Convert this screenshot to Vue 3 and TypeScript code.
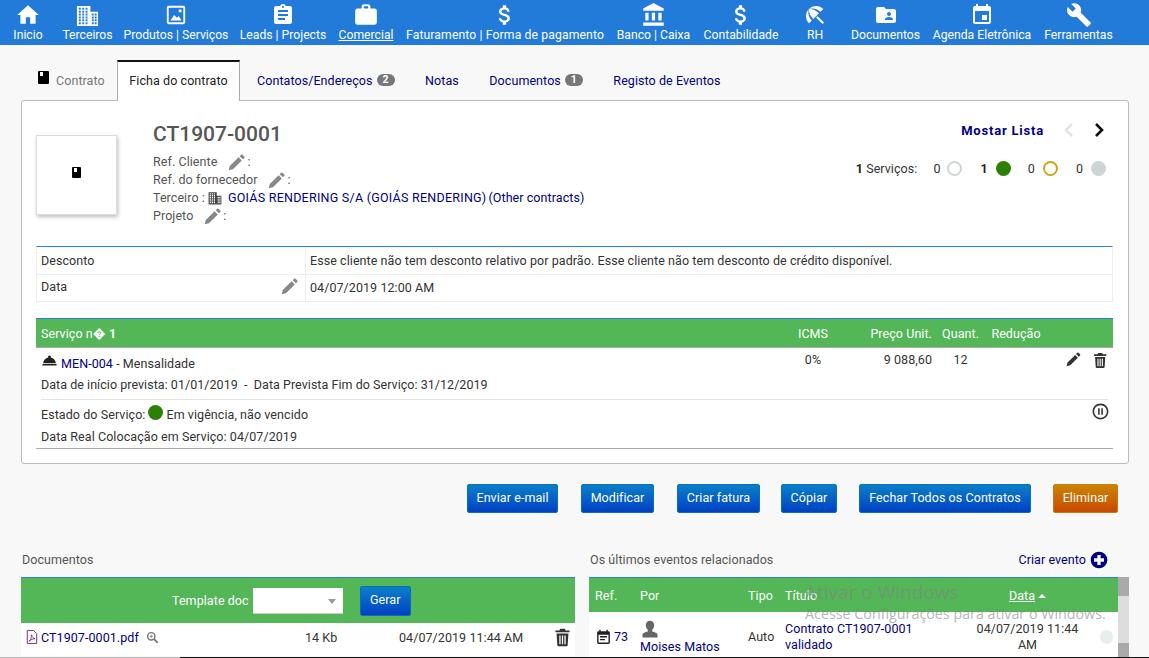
<script setup lang="ts">
const P = {
  home: 'M10 20v-6h4v6h5v-8h3L12 3 2 12h3v8z',
  assign: 'M19 3h-4.18C14.4 1.84 13.3 1 12 1c-1.3 0-2.4.84-2.82 2H5c-1.1 0-2 .9-2 2v14c0 1.1.9 2 2 2h14c1.1 0 2-.9 2-2V5c0-1.1-.9-2-2-2zm-7 0c.55 0 1 .45 1 1s-.45 1-1 1-1-.45-1-1 .45-1 1-1zm2 14H7v-2h7v2zm3-4H7v-2h10v2zm0-4H7V7h10v2z',
  work: 'M20 6h-4V4c0-1.11-.89-2-2-2h-4c-1.11 0-2 .89-2 2v2H4c-1.11 0-1.99.89-1.99 2L2 19c0 1.11.89 2 2 2h16c1.11 0 2-.89 2-2V8c0-1.11-.89-2-2-2zm-6 0h-4V4h4v2z',
  money: 'M11.8 10.9c-2.27-.59-3-1.2-3-2.15 0-1.09 1.01-1.85 2.7-1.85 1.78 0 2.44.85 2.5 2.1h2.21c-.07-1.72-1.12-3.3-3.21-3.81V3h-3v2.16c-1.94.42-3.5 1.68-3.5 3.61 0 2.31 1.91 3.46 4.7 4.13 2.5.6 3 1.48 3 2.41 0 .69-.49 1.79-2.7 1.79-2.06 0-2.87-.92-2.98-2.1h-2.2c.12 2.19 1.76 3.42 3.68 3.83V21h3v-2.15c1.95-.37 3.5-1.5 3.5-3.55 0-2.84-2.43-3.81-4.7-4.4z',
  bank: 'M4 10v7h3v-7H4zm6 0v7h3v-7h-3zM2 22h19v-3H2v3zm14-12v7h3v-7h-3zm-4.5-9L2 6v2h19V6l-9.5-5z',
  beach: 'M13.127 14.56l1.43-1.43 6.44 6.443L19.57 21zm4.293-5.73l2.86-2.86c-3.95-3.95-10.35-3.96-14.3-.02 3.93-1.3 8.31-.25 11.44 2.88zM5.95 5.98c-3.94 3.95-3.93 10.35.02 14.3l2.86-2.86C5.7 14.29 4.65 9.91 5.95 5.98zm.02-.02l-.01.01c-.38 3.01 1.17 6.88 4.3 10.02l5.73-5.73c-3.13-3.13-7.01-4.68-10.02-4.3z',
  folder: 'M20 6h-8l-2-2H4c-1.1 0-1.99.9-1.99 2L2 18c0 1.1.9 2 2 2h16c1.1 0 2-.9 2-2V8c0-1.1-.9-2-2-2zm-5 3c1.1 0 2 .9 2 2s-.9 2-2 2-2-.9-2-2 .9-2 2-2zm4 8h-8v-1c0-1.33 2.67-2 4-2s4 .67 4 2v1z',
  event: 'M17 12h-5v5h5v-5zM16 1v2H8V1H6v2H5c-1.11 0-1.99.9-1.99 2L3 19c0 1.1.89 2 2 2h14c1.1 0 2-.9 2-2V5c0-1.1-.9-2-2-2h-1V1h-2zm3 18H5V8h14v11z',
  build: 'M22.7 19l-9.1-9.1c.9-2.3.4-5-1.5-6.9-2-2-5-2.4-7.4-1.3L9 6 6 9 1.6 4.7C.4 7.1.9 10.1 2.9 12.1c1.9 1.9 4.6 2.4 6.9 1.5l9.1 9.1c.4.4 1 .4 1.4 0l2.3-2.3c.5-.4.5-1.1.1-1.4z',
  image: 'M4 2h16a2 2 0 0 1 2 2v16a2 2 0 0 1-2 2H4a2 2 0 0 1-2-2V4a2 2 0 0 1 2-2zm0 2v16h16V4zm11 2h3v3h-3zM6 18l4-6 3 3 2-2 3 5z',
  pencil: 'M1 23l1.500-6L15 4.500 19.500 9 7 21.500zM16.500 3l2-2a1.500 1.500 0 0 1 2 0l2.500 2.500a1.500 1.500 0 0 1 0 2l-2 2z',
  trash: 'M9 1h6l1 2h5v2.500H3V3h5zM4.500 7h15l-1 15a1.500 1.500 0 0 1-1.500 1H7a1.500 1.500 0 0 1-1.500-1zM8 9.500v11h1.600v-11zm3.200 0v11h1.600v-11zm3.200 0v11H16v-11z',
  note: 'M17 10H7v2h10v-2zm2-7h-1V1h-2v2H8V1H6v2H5c-1.11 0-1.99.9-1.99 2L3 19c0 1.1.89 2 2 2h14c1.1 0 2-.9 2-2V5c0-1.1-.9-2-2-2zm0 16H5V8h14v11zm-5-5H7v2h7v-2z',
  plus: 'M12 2a10 10 0 1 0 0 20 10 10 0 0 0 0-20zm6 12h-4v4h-4v-4H6v-4h4V6h4v4h4z',
  pause: 'M9 16h2V8H9v8zm3-14C6.48 2 2 6.48 2 12s4.48 10 10 10 10-4.48 10-10S17.52 2 12 2zm0 18c-4.41 0-8-3.59-8-8s3.59-8 8-8 8 3.59 8 8-3.59 8-8 8zm1-4h2V8h-2v8z',
  bell: 'M2 17h20v2H2zm11.84-9.21c.1-.24.16-.51.16-.79 0-1.1-.9-2-2-2s-2 .9-2 2c0 .28.06.55.16.79C6.25 8.6 3.27 11.93 3 16h18c-.27-4.07-3.25-7.4-7.16-8.21z',
  person: 'M12 1c3 0 5 2.400 5 5.400 0 2.200-.9 4.300-2.400 5.400v2.100c3 .8 6.400 2 6.400 3.600V21H3v-3.500c0-1.600 3.400-2.800 6.400-3.600v-2.100C7.900 10.700 7 8.600 7 6.400 7 3.400 9 1 12 1z',
}

// Building glyph: tall left block, lower right block, windows as holes.
function buildingPath(): string {
  let d = 'M1 2h14v6h8v15H1z'
  for (const y of [4, 7, 10, 13, 16, 19]) {
    for (const x of [3, 6.5, 10]) d += `M${x} ${y}h2v2h-2z`
  }
  for (const y of [10, 13, 16, 19]) {
    for (const x of [16.5, 19.5]) d += `M${x} ${y}h2v2h-2z`
  }
  return d
}
const building = buildingPath()

const nav = [
  { label: 'Inicio', icon: P.home, w: 42, mr: 8, size: 26, ls: 0 },
  { label: 'Terceiros', icon: building, w: 61, mr: 0, size: 23, ls: 0 },
  { label: 'Produtos | Serviços', icon: P.image, w: 116, mr: 0, size: 22, ls: 0 },
  { label: 'Leads | Projects', icon: P.assign, w: 98, mr: 0, size: 24, ls: 0 },
  { label: 'Comercial', icon: P.work, w: 68, mr: 0, size: 26, ls: 0, active: true },
  { label: 'Faturamento | Forma de pagamento', icon: P.money, w: 210, mr: 0, size: 26, ls: 0.12 },
  { label: 'Banco | Caixa', icon: P.bank, w: 87, mr: 0, size: 26, ls: 0 },
  { label: 'Contabilidade', icon: P.money, w: 88, mr: 0, size: 26, ls: 0 },
  { label: 'RH', icon: P.beach, w: 60, mr: 0, size: 24, ls: 0 },
  { label: 'Documentos', icon: P.folder, w: 81, mr: 0, size: 24, ls: 0 },
  { label: 'Agenda Eletrônica', icon: P.event, w: 112, mr: 0, size: 24, ls: 0 },
  { label: 'Ferramentas', icon: P.build, w: 81, mr: 0, size: 26, ls: 0 },
]

const tabs = [
  { label: 'Contatos/Endereços', badge: '2' },
  { label: 'Notas' },
  { label: 'Documentos', badge: '1' },
  { label: 'Registo de Eventos' },
]

const buttons = [
  { label: 'Enviar e-mail', w: 91, ml: 0 },
  { label: 'Modificar', w: 73, ml: 23 },
  { label: 'Criar fatura', w: 83, ml: 23 },
  { label: 'Cópiar', w: 56, ml: 21 },
  { label: 'Fechar Todos os Contratos', w: 172, ml: 22 },
  { label: 'Eliminar', w: 65, ml: 22, danger: true },
]
</script>

<template>
  <div class="page">
    <nav class="topbar">
      <a
        v-for="item in nav"
        :key="item.label"
        class="nav-item"
        :class="{ active: item.active }"
        :style="{ width: item.w + 'px', marginRight: item.mr + 'px', letterSpacing: item.ls + 'px' }"
      >
        <span class="nav-icon">
          <svg :width="item.size" :height="item.size" viewBox="0 0 24 24"><path :d="item.icon" fill="#fff" fill-rule="evenodd" /></svg>
        </span>
        <span class="nav-label">{{ item.label }}</span>
      </a>
    </nav>

    <main class="content">
      <div class="tabs">
        <span class="tab tab-static">
          <span class="book small"></span>
          Contrato
        </span>
        <span class="tab tab-active">Ficha do contrato</span>
        <span v-for="t in tabs" :key="t.label" class="tab tab-link">
          {{ t.label }}<b v-if="t.badge" class="badge">{{ t.badge }}</b>
        </span>
      </div>

      <section class="card">
        <div class="head">
          <div class="photo"><span class="book"></span></div>
          <div class="ident">
            <h1>CT1907-0001</h1>
            <div class="ref">Ref. Cliente <svg class="ed" viewBox="0 0 24 24"><path :d="P.pencil" /></svg> :</div>
            <div class="ref">Ref. do fornecedor <svg class="ed" viewBox="0 0 24 24"><path :d="P.pencil" /></svg> :</div>
            <div class="ref">
              Terceiro :
              <svg class="bld" viewBox="0 0 24 24"><path :d="building" fill-rule="evenodd" /></svg>
              <a class="link upper">GOIÁS RENDERING S/A (GOIÁS RENDERING)</a> <a class="link">(Other contracts)</a>
            </div>
            <div class="ref">Projeto <svg class="ed" viewBox="0 0 24 24"><path :d="P.pencil" /></svg> :</div>
          </div>
          <div class="status">
            <div class="pager">
              <a class="list-link">Mostar Lista</a>
              <svg class="chev" viewBox="0 0 12 14"><path d="M9 1 3 7l6 6" fill="none" stroke="#e4e4e4" stroke-width="2.600" /></svg>
              <svg class="chev" viewBox="0 0 12 14"><path d="m3 1 6 6-6 6" fill="none" stroke="#111" stroke-width="2.600" /></svg>
            </div>
            <div class="counts">
              <span class="total"><b>1</b> Serviços:</span>
              <span class="cnt c1">0</span><i class="dot open"></i>
              <b class="cnt c2">1</b><i class="dot green"></i>
              <span class="cnt c3">0</span><i class="dot amber"></i>
              <span class="cnt c4">0</span><i class="dot grey"></i>
            </div>
          </div>
        </div>

        <div class="info">
          <div class="info-row">
            <div class="info-key">Desconto</div>
            <div class="info-val">Esse cliente não tem desconto relativo por padrão. Esse cliente não tem desconto de crédito disponível.</div>
          </div>
          <div class="info-row">
            <div class="info-key">Data <svg class="ed" viewBox="0 0 24 24"><path :d="P.pencil" /></svg></div>
            <div class="info-val">04/07/2019 12:00 AM</div>
          </div>
        </div>

        <div class="service">
          <div class="svc-grid svc-head">
            <div class="svc-title">Serviço n� <b>1</b></div>
            <div class="c">ICMS</div>
            <div class="r">Preço Unit.</div>
            <div class="c">Quant.</div>
            <div class="c">Redução</div>
            <div></div>
          </div>
          <div class="svc-grid svc-main">
            <div class="svc-desc">
              <div class="l1">
                <svg class="bell" viewBox="0 0 24 24"><path :d="P.bell" /></svg>
                <span><a class="link">MEN-004</a> - Mensalidade</span>
              </div>
              <div class="l2">Data de início prevista: 01/01/2019 &nbsp;-&nbsp; Data Prevista Fim do Serviço: 31/12/2019</div>
            </div>
            <div class="c">0%</div>
            <div class="r">9 088,60</div>
            <div class="c">12</div>
            <div></div>
            <div class="actions">
              <svg width="17" height="17" viewBox="0 0 24 24"><path :d="P.pencil" fill="#333" /></svg>
              <svg width="19" height="19" viewBox="0 0 24 24"><path :d="P.trash" fill="#333" fill-rule="evenodd" /></svg>
            </div>
          </div>
          <div class="svc-state">
            <div>
              <div class="l3">Estado do Serviço: <i class="dot green small-dot"></i> Em vigência, não vencido</div>
              <div class="l4">Data Real Colocação em Serviço: 04/07/2019</div>
            </div>
            <svg class="pause" width="19" height="19" viewBox="0 0 24 24"><path :d="P.pause" fill="#333" /></svg>
          </div>
        </div>
      </section>

      <div class="btnbar">
        <button
          v-for="b in buttons"
          :key="b.label"
          class="btn"
          :class="{ danger: b.danger }"
          :style="{ width: b.w + 'px', marginLeft: b.ml + 'px' }"
        >{{ b.label }}</button>
      </div>

      <div class="lower">
        <div class="docs">
          <div class="sec-title">Documentos</div>
          <div class="green-bar doc-bar">
            <span>Template doc</span>
            <span class="select"><i></i></span>
            <button class="btn gerar">Gerar</button>
          </div>
          <div class="doc-row">
            <svg class="pdf" viewBox="0 0 14 16"><path d="M1.500.5h7.500l3.500 3.500v11.500h-11z" fill="none" stroke="#5b1a66" /><path d="M3.500 13c2-1.500 3-5 3-7.500 1 3 2 4 4 4.500-2.500 0-4.500 1-7 3z" fill="none" stroke="#5b1a66" stroke-width=".9" /></svg>
            <a class="link fname">CT1907-0001.pdf</a>
            <svg class="zoomi" viewBox="0 0 16 16"><circle cx="6.500" cy="6.500" r="4.500" fill="none" stroke="#777" stroke-width="1.800" /><path d="m10 10 4.500 4.500" stroke="#777" stroke-width="2.200" /><path d="M4.500 6.500h4M6.500 4.500v4" stroke="#777" /></svg>
            <span class="size">14 Kb</span>
            <span class="ddate">04/07/2019 11:44 AM</span>
            <svg class="dtrash" width="19" height="19" viewBox="0 0 24 24"><path :d="P.trash" fill="#333" fill-rule="evenodd" /></svg>
          </div>
        </div>

        <div class="events">
          <div class="ev-top">
            <div class="sec-title">Os últimos eventos relacionados</div>
            <a class="create">Criar evento
              <svg width="20" height="20" viewBox="0 0 24 24"><path :d="P.plus" fill="#000080" fill-rule="evenodd" /></svg>
            </a>
          </div>
          <div class="ev-wrap">
            <div class="ev-table">
              <div class="ev-grid green-bar ev-head">
                <span>Ref.</span>
                <span>Por</span>
                <span>Tipo</span>
                <span class="nopad">Título</span>
                <span class="c nopad"><u>Data</u><i class="caret"></i></span>
                <span></span>
              </div>
              <div class="ev-grid ev-row">
                <span class="ev-ref">
                  <svg width="17" height="17" viewBox="0 0 24 24"><path :d="P.note" fill="#222" /></svg>
                  <a class="link">73</a>
                </span>
                <span class="ev-by">
                  <svg width="20" height="20" viewBox="0 0 24 24"><path :d="P.person" fill="#666" /></svg>
                  <a class="link">Moises Matos</a>
                </span>
                <span class="ev-type">Auto</span>
                <a class="link ev-title">Contrato CT1907-0001 validado</a>
                <span class="c">04/07/2019 11:44 AM</span>
                <i class="ev-dot"></i>
              </div>
            </div>
            <div class="scroll"><i class="th1"></i><i class="th2"></i></div>
          </div>
        </div>
      </div>
    </main>

    <div class="watermark">
      <div class="w1">Ativar o Windows</div>
      <div class="w2">Acesse Configurações para ativar o Windows.</div>
    </div>
    <div class="edge"></div>
  </div>
</template>

<style>
html, body { margin: 0; background: #f8f8f8; overflow: hidden; }
</style>

<style scoped>
.page {
  position: relative;
  width: 1149px;
  height: 658px;
  overflow: hidden;
  background: #f8f8f8;
  font-family: Roboto, "Liberation Sans", sans-serif;
  font-size: 12.5px;
  letter-spacing: .07px;
  color: #333;
}
.edge {
  position: absolute;
  left: 0;
  right: 0;
  bottom: 0;
  height: 1px;
  background: linear-gradient(90deg, #bbb 0, #bbb 180px, #111 180px, #111 100%);
}
.topbar {
  display: flex;
  height: 45px;
  padding-left: 7px;
  background: #237bd9;
  box-sizing: border-box;
}
.nav-item {
  flex: none;
  display: flex;
  flex-direction: column;
  align-items: center;
  color: #fff;
  font-size: 12.2px;
}
.nav-icon { height: 28px; display: flex; align-items: center; justify-content: center; margin-top: 1px; }
.nav-label { line-height: 14px; margin-top: -1px; white-space: nowrap; }
.nav-item.active .nav-label { text-decoration: underline; }

.content { padding: 15px 20px 0 21px; }
.tabs { display: flex; height: 40px; align-items: stretch; }
.tab { display: flex; align-items: center; white-space: nowrap; box-sizing: border-box; padding-top: 1px; }
.tab-static { width: 96px; padding-left: 17px; color: #777; gap: 7px; }
.tab-active {
  width: 123px;
  justify-content: center;
  background: #fff;
  border: 1px solid #aaa;
  border-top: 2px solid #111;
  border-bottom: 0;
  color: #222;
  position: relative;
  height: 41px;
  padding-top: 0;
  padding-bottom: 3px;
  z-index: 1;
}
.tab-link { color: #000080; padding: 0 13.500px 0 17px; }
.badge {
  display: inline-block;
  margin-left: 4px;
  min-width: 18px;
  height: 12px;
  line-height: 12px;
  border-radius: 7px;
  background: #777;
  color: #fff;
  font-size: 10.500px;
  text-align: center;
}
.book {
  display: inline-block;
  width: 9px;
  height: 11px;
  background: #000;
  border-radius: 1px;
  position: relative;
}
.book::after {
  content: "";
  position: absolute;
  left: 2px;
  top: 1px;
  width: 3px;
  height: 4px;
  background: #fff;
}
.book.small { width: 11px; height: 13px; margin-top: -6px; }

.card {
  height: 364px;
  box-sizing: border-box;
  background: #fff;
  border: 1px solid #bbb;
  border-radius: 3px;
  padding: 0 15px 0 14px;
}
.head { display: flex; height: 145px; }
.photo {
  flex: none;
  width: 81px;
  height: 80px;
  margin-top: 34px;
  padding-bottom: 6px;
  box-sizing: border-box;
  background: #fff;
  border: 1px solid #ddd;
  box-shadow: 1px 2px 4px rgba(0, 0, 0, .25);
  display: flex;
  align-items: center;
  justify-content: center;
}
.ident { margin-left: 36px; flex: 1; padding-top: 20px; color: #555; }
h1 {
  margin: 0 0 6px;
  font-size: 21px;
  line-height: 26px;
  font-weight: 500;
  color: #555;
  letter-spacing: 0;
}
.ref { height: 18px; line-height: 18px; white-space: nowrap; display: flex; align-items: center; gap: 2px; }
.ref .ed { margin-left: 9px; }
.ed { width: 17px; height: 17px; fill: #888; flex: none; }
.bld { width: 14px; height: 14px; fill: #444; margin-right: 4px; margin-left: 1px; }
.upper { letter-spacing: .25px; }
.link { color: #000080; }
.status { width: 270px; flex: none; display: flex; flex-direction: column; align-items: flex-end; }
.pager { display: flex; align-items: center; margin-top: 20px; height: 18px; padding-right: 8px; }
.list-link { font-weight: 700; color: #000080; font-size: 13px; letter-spacing: .8px; margin-right: 19px; }
.chev { width: 12px; height: 14px; }
.chev + .chev { margin-left: 18px; }
.counts { display: flex; align-items: center; margin-top: 19px; height: 20px; padding-right: 7px; color: #333; }
.total { margin-right: 16px; }
.total b, b.cnt { font-weight: 700; color: #222; }
.cnt { margin-right: 8px; }
.c1 { margin-right: 6px; }
.c2 { margin-left: 19px; }
.c3 { margin-left: 17px; }
.c4 { margin-left: 18px; }
.dot { display: inline-block; width: 15px; height: 15px; border-radius: 50%; box-sizing: border-box; flex: none; }
.open { border: 2px solid #ced6d6; }
.green { background: #2d8006; }
.amber { border: 2px solid #c9a81f; }
.grey { background: #ccd4d4; }

.info { border-top: 1px solid #2b7fe0; border-bottom: 1px solid #eee; border-left: 1px solid #eee; border-right: 1px solid #eee; }
.info-row { display: flex; height: 27px; }
.info-row + .info-row { border-top: 1px solid #eee; height: 26px; }
.info-key {
  width: 257px;
  flex: none;
  padding: 0 7px 0 4px;
  display: flex;
  align-items: center;
  justify-content: space-between;
  border-right: 1px solid #eee;
  margin-right: 4px;
}
.info-row + .info-row .info-key { padding-bottom: 3px; height: 23px; }
.info-row + .info-row .info-val { padding-bottom: 1px; }
.info-val { display: flex; align-items: center; white-space: nowrap; }

.service { margin-top: 16px; border-bottom: 1px solid #aaa; }
.svc-grid {
  display: grid;
  grid-template-columns: 754px 46px 96px 57px 54px 70px;
}
.c { text-align: center; }
.r { text-align: right; }
.svc-head {
  height: 30px;
  box-sizing: border-box;
  align-items: center;
  background: #53b657;
  color: #fff;
  border-top: 1px solid #2b7fe0;
  border-bottom: 1px solid #aaa;
}
.svc-title { padding-left: 5px; }
.svc-main { height: 51px; }
.svc-main > .c, .svc-main > .r { padding-top: 4px; }
.svc-desc { padding-left: 5px; white-space: nowrap; }
.l1 { display: flex; align-items: center; height: 16px; margin-top: 7px; }
.bell { width: 17px; height: 17px; fill: #222; margin: -5px 3px 0 0; }
.l2 { margin-top: 6px; height: 16px; line-height: 16px; letter-spacing: .04px; }
.actions { display: flex; align-items: flex-start; gap: 11px; padding: 3px 5px 0 23px; }
.svc-state {
  display: flex;
  justify-content: space-between;
  margin: 0 5px;
  border-top: 1px solid #e4e4e4;
  height: 49px;
  box-sizing: border-box;
}
.l3 { display: flex; align-items: center; gap: 3px; height: 16px; margin-top: 6px; }
.small-dot { margin-top: -4px; }
.l4 { margin-top: 7px; height: 16px; line-height: 16px; }
.pause { margin: 2px -2px 0 0; }

.btnbar { display: flex; justify-content: flex-start; padding: 20px 0 0 446px; height: 29px; }
.btn {
  height: 29px;
  padding: 0 0 2px;
  box-sizing: border-box;
  border: 1px solid #0a6fb8;
  border-radius: 2px;
  background: linear-gradient(#0a80c8, #0041c4);
  color: #fff;
  font: 12.5px Roboto, sans-serif;
  letter-spacing: .07px;
  flex: none;
}
.danger { background: linear-gradient(#cc8400, #c84800); border-color: #c77a10; }

.lower { display: flex; margin-top: 37px; }
.sec-title { height: 27px; line-height: 19px; color: #555; padding-left: 1px; white-space: nowrap; }
.docs { width: 554px; flex: none; }
.green-bar { background: #53b657; color: #fff; border-top: 1px solid #2b7fe0; box-sizing: border-box; }
.doc-bar { height: 46px; display: flex; align-items: center; padding-left: 151px; }
.select {
  position: relative;
  display: block;
  width: 90px;
  height: 26px;
  margin-left: 4px;
  background: #fff;
  border-bottom: 1px solid #ccc;
  box-sizing: border-box;
}
.select i {
  position: absolute;
  right: 7px;
  top: 11px;
  border: 4px solid transparent;
  border-top: 5px solid #999;
  border-bottom: 0;
}
.gerar { width: 51px; height: 30px; margin-left: 17px; }
.doc-row {
  height: 33px;
  padding-bottom: 5px;
  box-sizing: border-box;
  background: #fff;
  display: flex;
  align-items: center;
  position: relative;
  white-space: nowrap;
}
.pdf { width: 12px; height: 14px; margin-left: 5px; }
.fname { margin-left: 3px; }
.zoomi { width: 13px; height: 13px; margin-left: 7px; }
.size { position: absolute; left: 284px; }
.ddate { position: absolute; left: 378px; }
.dtrash { position: absolute; left: 532px; }
.events { margin-left: 14px; width: 540px; flex: none; }
.ev-top { display: flex; justify-content: space-between; padding-right: 20px; height: 27px; }
.create { color: #000080; display: flex; align-items: flex-start; gap: 3px; line-height: 19px; }
.ev-wrap { display: flex; }
.ev-table { width: 529px; }
.ev-grid { display: grid; grid-template-columns: 45px 108px 43px 190px 105px 38px; }
.ev-head { height: 35px; align-items: center; }
.ev-head span { padding-left: 6px; }
.ev-head span.nopad { padding-left: 0; }
.caret {
  display: inline-block;
  margin-left: 3px;
  vertical-align: 2px;
  border: 4px solid transparent;
  border-bottom: 4px solid #fff;
  border-top: 0;
}
.ev-row { height: 50px; background: #fff; align-items: center; line-height: 16px; }
.ev-ref { display: flex; align-items: center; gap: 2px; padding-left: 6px; }
.ev-by { display: flex; flex-direction: column; align-items: flex-start; align-self: start; padding: 8px 0 0 6px; white-space: nowrap; }
.ev-by svg { margin-bottom: -1px; }
.ev-type { padding-left: 6px; }
.ev-title { max-width: 140px; }
.ev-dot { width: 13px; height: 14px; border-radius: 50%; background: #e8eeee; justify-self: end; margin-right: 5px; }
.scroll { position: relative; width: 11px; height: 85px; background: #ddd; }
.th1 { position: absolute; left: 0; top: 0; width: 100%; height: 19px; background: #aaa; }
.th2 { position: absolute; left: 0; top: 66px; width: 100%; height: 19px; background: #aaa; }

.watermark {
  position: absolute;
  left: 805px;
  top: 579px;
  pointer-events: none;
  font-family: "Open Sans", sans-serif;
  color: rgba(130, 130, 130, .6);
  white-space: nowrap;
}
.w1 { font-size: 19px; line-height: 26px; letter-spacing: 0; }
.w2 { font-size: 14.300px; line-height: 18px; letter-spacing: 0; }
</style>
